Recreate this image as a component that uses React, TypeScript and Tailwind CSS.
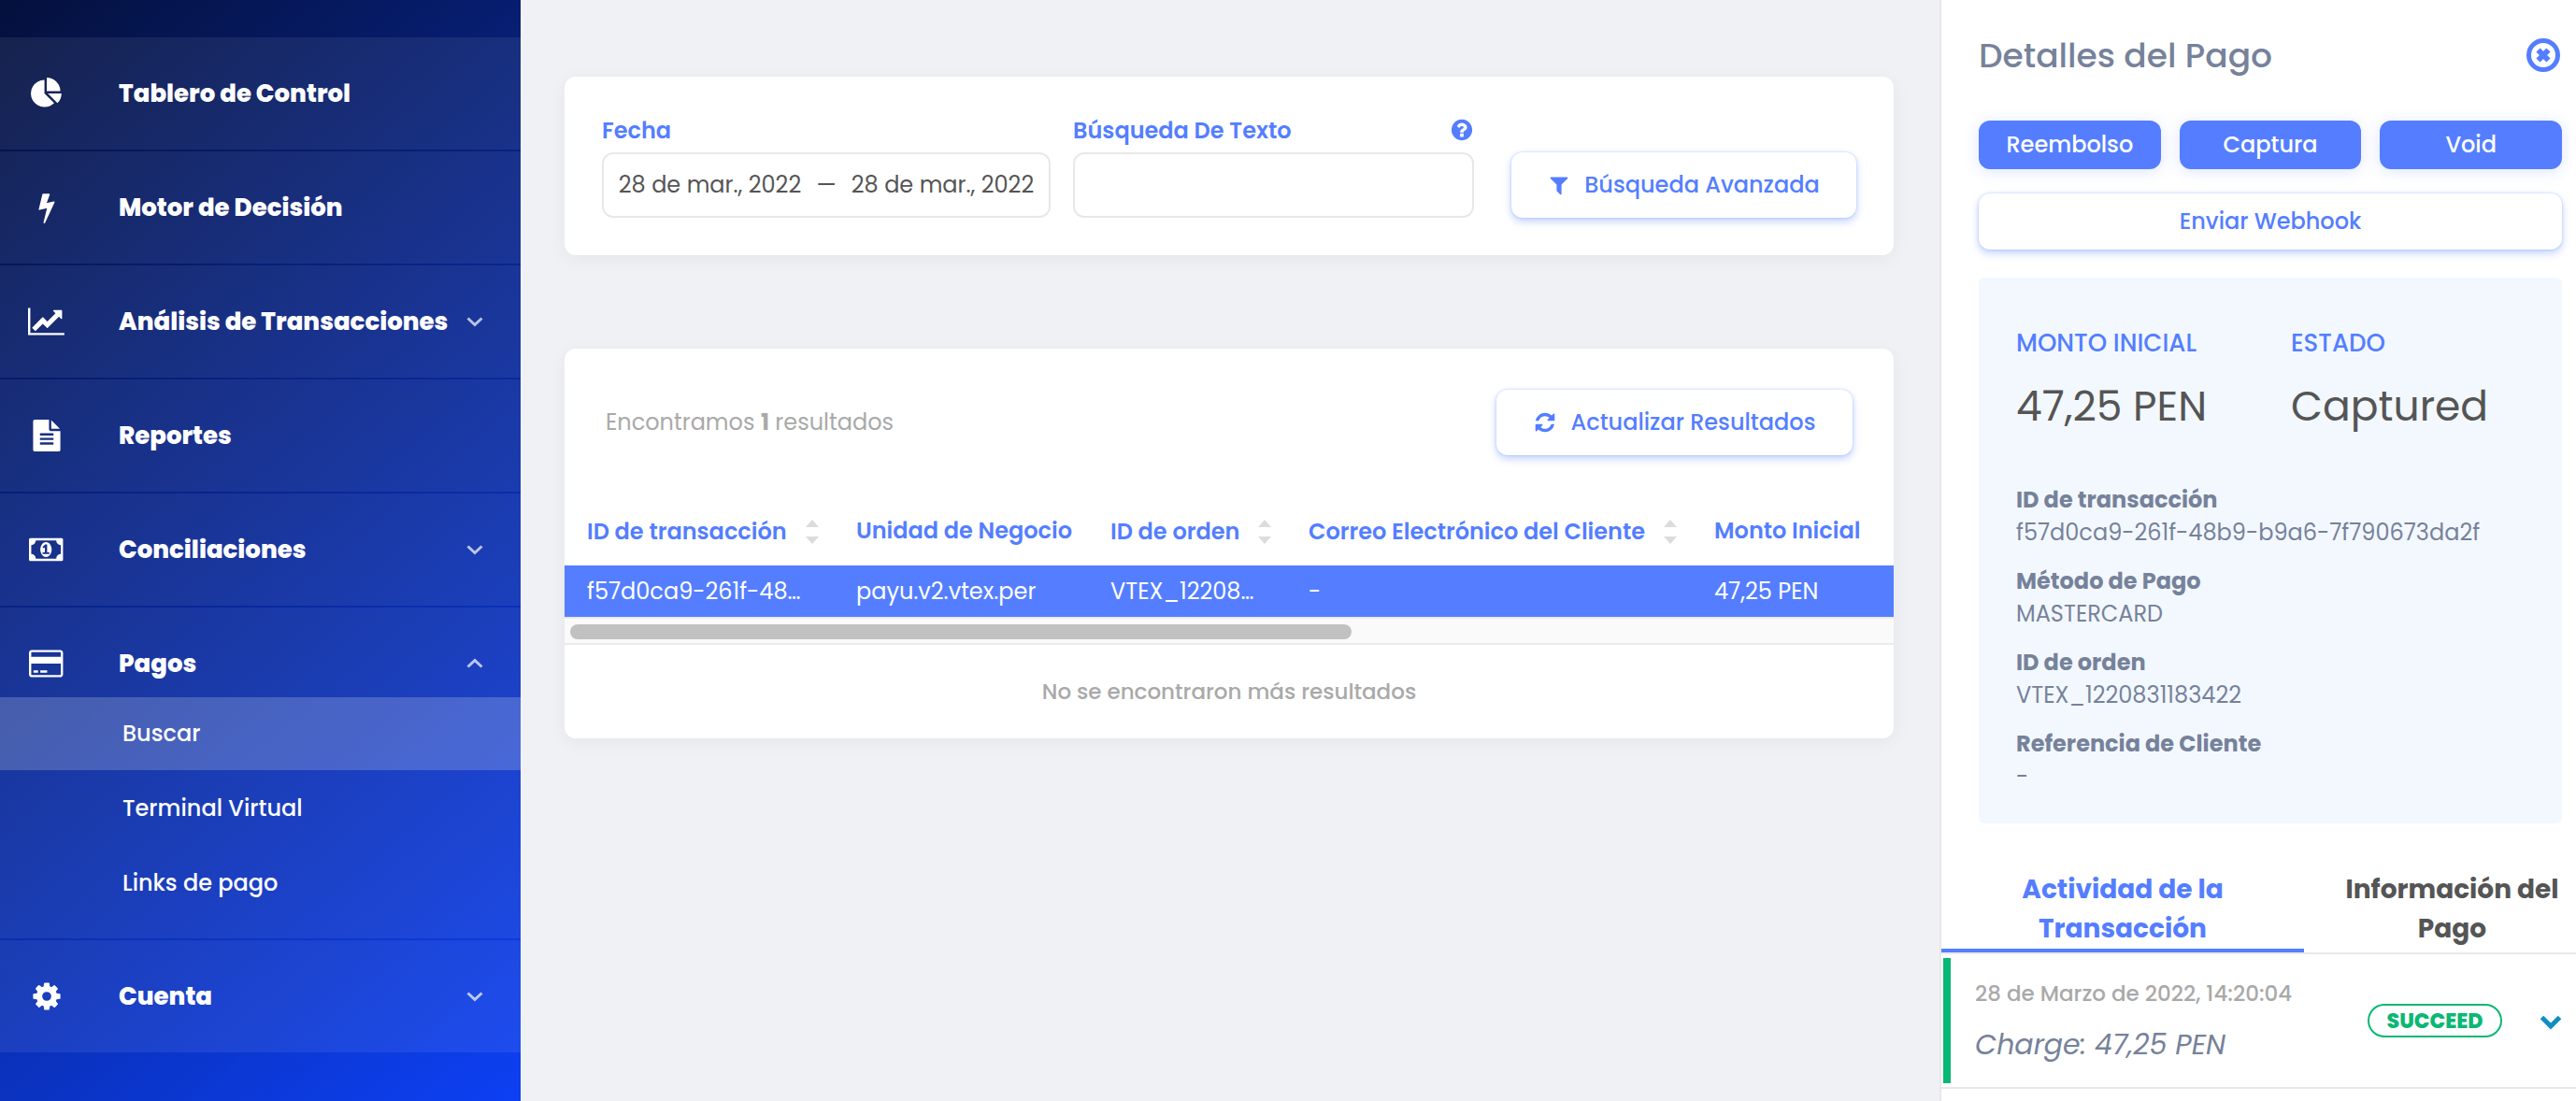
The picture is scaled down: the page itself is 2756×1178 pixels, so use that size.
import React from "react";

const ICONS = {
  pie: { w: 1792, d: "M768 890l546 546q-106 108-247.5 168t-298.5 60q-209 0-385.5-103t-279.5-279.5-103-385.5 103-385.5 279.5-279.5 385.5-103v762zm187 6h773q0 157-60 298.5t-168 247.5zm709-128h-768v-768q209 0 385.5 103t279.5 279.5 103 385.5z" },
  bolt: { w: 1792, d: "M1333 566q18 20 7 44l-540 1157q-13 25-42 25-4 0-14-2-17-5-25.5-19t-4.5-30l197-808-406 101q-4 1-12 1-18 0-31-11-18-15-13-39l201-825q4-16 16-26t28-10h328q19 0 32 12.5t13 29.5q0 8-5 18l-171 463 396-98q8-2 12-2 19 0 34 15z" },
  chart: { w: 2048, d: "M2048 1536v128h-2048v-1536h128v1408h1920zm-128-1248v435q0 21-19.5 29.5t-35.5-7.5l-121-121-633 633q-10 10-23 10t-23-10l-233-233-416 416-192-192 585-585q10-10 23-10t23 10l233 233 464-464-121-121q-16-16-7.5-35.5t29.5-19.5h435q14 0 23 9t9 23z" },
  file: { w: 1792, d: "M1596 476q14 14 28 36h-472v-472q22 14 36 28zm-476 164h544v1056q0 40-28 68t-68 28h-1344q-40 0-68-28t-28-68v-1600q0-40 28-68t68-28h800v544q0 40 28 68t68 28zm160 736v-64q0-14-9-23t-23-9h-704q-14 0-23 9t-9 23v64q0 14 9 23t23 9h704q14 0 23-9t9-23zm0-256v-64q0-14-9-23t-23-9h-704q-14 0-23 9t-9 23v64q0 14 9 23t23 9h704q14 0 23-9t9-23zm0-256v-64q0-14-9-23t-23-9h-704q-14 0-23 9t-9 23v64q0 14 9 23t23 9h704q14 0 23-9t9-23z" },
  money: { w: 1920, d: "M768 1152h384v-96h-128v-448h-114l-148 137 77 80q42-37 55-57h2v288h-128v96zm512-256q0 70-21 142t-59.5 134-101.5 101-138 39-138-39-101.5-101-59.5-134-21-142 21-142 59.5-134 101.5-101 138-39 138 39 101.5 101 59.5 134 21 142zm512 256v-512q-106 0-181-75t-75-181h-1152q0 106-75 181t-181 75v512q106 0 181 75t75 181h1152q0-106 75-181t181-75zm128-832v1152q0 26-19 45t-45 19h-1792q-26 0-45-19t-19-45v-1152q0-26 19-45t45-19h1792q26 0 45 19t19 45z" },
  card: { w: 1920, d: "M1760 128q66 0 113 47t47 113v1216q0 66-47 113t-113 47h-1600q-66 0-113-47t-47-113v-1216q0-66 47-113t113-47h1600zm-1600 128q-13 0-22.5 9.5t-9.5 22.5v224h1664v-224q0-13-9.5-22.5t-22.5-9.5h-1600zm1600 1280q13 0 22.5-9.5t9.5-22.5v-608h-1664v608q0 13 9.5 22.5t22.5 9.5h1600zm-1504-128v-128h256v128h-256zm384 0v-128h384v128h-384z" },
  cog: { w: 1792, d: "M1152 896q0-106-75-181t-181-75-181 75-75 181 75 181 181 75 181-75 75-181zm512-109v222q0 12-8 23t-20 13l-185 28q-19 54-39 91 35 50 107 138 10 12 10 25t-9 23q-27 37-99 108t-94 71q-12 0-26-9l-138-108q-44 23-91 38-16 136-29 186-7 28-36 28h-222q-14 0-24.5-8.5t-11.5-21.5l-28-184q-49-16-90-37l-141 107q-10 9-25 9-14 0-25-11-126-114-165-168-7-10-7-23 0-12 8-23 15-21 51-66.5t54-70.5q-27-50-41-99l-183-27q-13-2-21-12.5t-8-23.5v-222q0-12 8-23t19-13l186-28q14-46 39-92-40-57-107-138-10-12-10-24 0-10 9-23 26-36 98.5-107.5t94.5-71.5q13 0 26 10l138 107q44-23 91-38 16-136 29-186 7-28 36-28h222q14 0 24.5 8.5t11.5 21.5l28 184q49 16 90 37l142-107q9-9 24-9 13 0 25 10 129 119 165 170 7 8 7 22 0 12-8 23-15 21-51 66.5t-54 70.5q26 50 41 98l183 28q13 2 21 12.5t8 23.5z" },
  filter: { w: 1792, d: "M1595 295q17 41-14 70l-493 493v742q0 42-39 59-13 5-25 5-27 0-45-19l-256-256q-19-19-19-45v-486l-493-493q-31-29-14-70 17-39 59-39h1280q42 0 59 39z" },
  refresh: { w: 1792, d: "M1639 1056q0 5-1 7-64 268-268 434.5t-478 166.5q-146 0-282.5-55t-243.5-157l-129 129q-19 19-45 19t-45-19-19-45v-448q0-26 19-45t45-19h448q26 0 45 19t19 45-19 45l-137 137q71 66 161 102t187 36q134 0 250-65t186-179q11-17 53-117 8-23 30-23h192q13 0 22.5 9.5t9.5 22.5zm25-800v448q0 26-19 45t-45 19h-448q-26 0-45-19t-19-45 19-45l138-138q-148-137-349-137-134 0-250 65t-186 179q-11 17-53 117-8 23-30 23h-199q-13 0-22.5-9.5t-9.5-22.5v-7q65-268 270-434.5t480-166.5q146 0 284 55.5t245 156.5l130-129q19-19 45-19t45 19 19 45z" },
  help: { w: 1792, d: "M1024 1376v-192q0-14-9-23t-23-9h-192q-14 0-23 9t-9 23v192q0 14 9 23t23 9h192q14 0 23-9t9-23zm256-672q0-88-55.5-163t-138.5-116-170-41q-243 0-371 213-15 24 8 42l132 100q7 6 19 6 16 0 25-12 53-68 86-92 34-24 86-24 48 0 85.5 26t37.5 59q0 38-20 61t-68 45q-63 28-115.5 86.5t-52.5 125.5v36q0 14 9 23t23 9h192q14 0 23-9t9-23q0-19 21.5-49.5t54.5-49.5q32-18 49-28.5t46-35 44.5-48 28-60.5 12.5-81zm384 192q0 209-103 385.5t-279.5 279.5-385.5 103-385.5-103-279.5-279.5-103-385.5 103-385.5 279.5-279.5 385.5-103 385.5 103 279.5 279.5 103 385.5z" },
};

type IconName = keyof typeof ICONS;

function Icon({ name, className }: { name: IconName; className: string }) {
  const { w, d } = ICONS[name];
  return (
    <svg viewBox={`0 0 ${w} 1792`} fill="currentColor" className={className} aria-hidden="true">
      <path d={d} />
    </svg>
  );
}

function Chevron({ up = false }: { up?: boolean }) {
  return (
    <svg viewBox="0 0 18 12" fill="none" stroke="currentColor" strokeWidth="3" className="h-3 w-[18px] shrink-0 text-white/70" aria-hidden="true">
      <path d={up ? "M1.5 9.5L9 2.5l7.5 7" : "M1.5 2.5L9 9.5l7.5-7"} />
    </svg>
  );
}

function NavLabel({ icon, label, expand }: { icon: IconName; label: string; expand?: "up" | "down" }) {
  return (
    <>
      <span className="flex w-[39px] shrink-0 justify-center">
        <Icon name={icon} className="h-[34px] w-auto" />
      </span>
      <span className="ml-[58px] flex-1 text-left text-[26px] font-extrabold">{label}</span>
      {expand && <Chevron up={expand === "up"} />}
    </>
  );
}

function NavButton({ icon, label }: { icon: IconName; label: string }) {
  return (
    <li className="bg-white/[0.07]">
      <button type="button" className="flex h-[120px] w-full items-center pl-[30px] pr-10 whitespace-nowrap">
        <NavLabel icon={icon} label={label} expand="down" />
      </button>
    </li>
  );
}

function NavLink({ icon, label }: { icon: IconName; label: string }) {
  return (
    <li className="bg-white/[0.07]">
      <a href="#" className="flex h-[120px] items-center pl-[30px] pr-10 whitespace-nowrap">
        <NavLabel icon={icon} label={label} />
      </a>
    </li>
  );
}

function Sidebar() {
  return (
    <nav className="w-[557px] shrink-0 bg-[linear-gradient(140deg,#04103c,#0d40f3)] pt-10 text-white">
      <ul className="flex flex-col gap-0.5">
        <NavLink icon="pie" label="Tablero de Control" />
        <NavLink icon="bolt" label="Motor de Decisión" />
        <NavButton icon="chart" label="Análisis de Transacciones" />
        <NavLink icon="file" label="Reportes" />
        <NavButton icon="money" label="Conciliaciones" />
        <li className="bg-white/[0.07] pb-5">
          <button type="button" aria-expanded="true" className="flex h-24 w-full items-center pt-6 pl-[30px] pr-10 whitespace-nowrap">
            <NavLabel icon="card" label="Pagos" expand="up" />
          </button>
          <ul className="flex flex-col gap-0.5 text-2xl font-medium">
            <li>
              <a href="#" aria-current="page" className="flex h-[78px] items-center bg-white/20 pl-[131px]">Buscar</a>
            </li>
            <li>
              <a href="#" className="flex h-[78px] items-center pl-[131px]">Terminal Virtual</a>
            </li>
            <li>
              <a href="#" className="flex h-[78px] items-center pl-[131px]">Links de pago</a>
            </li>
          </ul>
        </li>
        <NavButton icon="cog" label="Cuenta" />
      </ul>
    </nav>
  );
}

const outlineButton =
  "flex items-center justify-center rounded-xl bg-white text-2xl font-medium text-[#547eff] whitespace-nowrap shadow-[0_4px_8px_rgba(84,126,255,0.35),0_0_3px_rgba(84,126,255,0.35)]";

function SearchCard() {
  return (
    <form className="flex items-end rounded-xl bg-white p-10 pt-[46px] shadow-[0_4px_20px_rgba(0,0,0,0.05)]">
      <fieldset className="w-[480px] shrink-0">
        <legend className="h-[35px] text-2xl leading-[24px] font-semibold text-[#547eff]">Fecha</legend>
        <div className="flex h-[70px] items-center rounded-xl border-2 border-[#e8e8e8] px-3 text-2xl text-[#555]">
          <input aria-label="Desde" readOnly defaultValue="28 de mar., 2022" className="w-0 flex-1 text-center outline-none" />
          <span className="w-[46px] text-center">—</span>
          <input aria-label="Hasta" readOnly defaultValue="28 de mar., 2022" className="w-0 flex-1 text-center outline-none" />
        </div>
      </fieldset>
      <div className="ml-6 min-w-0 flex-1">
        <div className="flex h-[35px] items-start justify-between text-[#547eff]">
          <label htmlFor="texto" className="text-2xl leading-[24px] font-semibold">Búsqueda De Texto</label>
          <button type="button" aria-label="Ayuda" className="flex h-[22px] items-center">
            <Icon name="help" className="size-[26px]" />
          </button>
        </div>
        <input id="texto" type="text" className="block h-[70px] w-full rounded-xl border-2 border-[#e8e8e8] px-4 text-2xl text-[#555] outline-none" />
      </div>
      <button type="button" className={`${outlineButton} ml-10 h-[70px] w-[369px] gap-[15px]`}>
        <Icon name="filter" className="size-6" />
        Búsqueda Avanzada
      </button>
    </form>
  );
}

function SortIcon() {
  return (
    <svg viewBox="0 0 14 26" className="h-[26px] w-[14px] shrink-0" fill="#dcdcdc" aria-hidden="true">
      <path d="M7 0l7 8H0zM7 26l7-8H0z" />
    </svg>
  );
}

const columns = [
  { title: "ID de transacción", value: "f57d0ca9-261f-48…", sortable: true, width: "w-[288px]" },
  { title: "Unidad de Negocio", value: "payu.v2.vtex.per", sortable: false, width: "w-[272px]" },
  { title: "ID de orden", value: "VTEX_12208…", sortable: true, width: "w-[212px]" },
  { title: "Correo Electrónico del Cliente", value: "-", sortable: true, width: "w-[434px]" },
  { title: "Monto Inicial", value: "47,25 PEN", sortable: false, width: "" },
];

function ResultsCard() {
  return (
    <section className="rounded-xl bg-white shadow-[0_4px_20px_rgba(0,0,0,0.05)]">
      <div className="flex items-center justify-between px-11 pt-11">
        <p className="text-2xl text-[#a9a9a9]">
          Encontramos <b className="font-bold">1</b> resultados
        </p>
        <button type="button" className={`${outlineButton} h-[70px] w-[381px] gap-4`}>
          <Icon name="refresh" className="size-6" />
          Actualizar Resultados
        </button>
      </div>
      <table className="mt-11 w-full table-fixed text-2xl whitespace-nowrap">
        <thead>
          <tr className="h-[74px] text-left text-[#547eff]">
            {columns.map((c) => (
              <th key={c.title} scope="col" className={`${c.width} pl-6 font-semibold`}>
                {c.sortable ? (
                  <button type="button" className="flex items-center gap-5 pt-0.5">
                    {c.title}
                    <SortIcon />
                  </button>
                ) : (
                  c.title
                )}
              </th>
            ))}
          </tr>
        </thead>
        <tbody>
          <tr className="h-[55px] bg-[#547eff] text-white">
            {columns.map((c) => (
              <td key={c.title} className="pl-6">{c.value}</td>
            ))}
          </tr>
        </tbody>
      </table>
      <div className="h-[30px] border-y-2 border-[#ebebeb] bg-[#fafafa] p-1.5">
        <div className="h-4 w-[59.3%] rounded-full bg-[#c1c1c1]" />
      </div>
      <p className="flex h-[100px] items-center justify-center text-[23px] font-medium text-[#a9a9a9]">No se encontraron más resultados</p>
    </section>
  );
}

const details = [
  ["ID de transacción", "f57d0ca9-261f-48b9-b9a6-7f790673da2f"],
  ["Método de Pago", "MASTERCARD"],
  ["ID de orden", "VTEX_1220831183422"],
  ["Referencia de Cliente", "-"],
];

const solidButton =
  "h-[52px] rounded-xl bg-[#547eff] text-2xl font-medium text-white shadow-[0_2px_16px_rgba(84,126,255,0.2)]";

function PaymentPanel() {
  return (
    <aside className="w-[681px] shrink-0 border-l-2 border-[#e8e8ea] bg-white">
      <div className="pr-[15px] pl-10">
        <header className="flex h-[129px] items-start justify-between pt-9">
          <h1 className="text-[36px] leading-[48px] font-medium text-[#76829a]">Detalles del Pago</h1>
          <button type="button" aria-label="Cerrar" className="mt-[5px] mr-0.5">
            <svg viewBox="0 0 36 36" fill="none" stroke="#547eff" className="size-9">
              <circle cx="18" cy="18" r="15.5" strokeWidth="5" />
              <path d="M12.5 12.5l11 11M23.5 12.5l-11 11" strokeWidth="6" />
            </svg>
          </button>
        </header>
        <div className="grid grid-cols-3 gap-5">
          <button type="button" className={solidButton}>Reembolso</button>
          <button type="button" className={solidButton}>Captura</button>
          <button type="button" className={solidButton}>Void</button>
        </div>
        <button type="button" className={`${outlineButton} mt-[26px] h-[60px] w-full`}>Enviar Webhook</button>
        <div className="mt-[30px] rounded-md bg-[#f3f8ff] px-10 pt-[50px] pb-[33px]">
          <dl className="grid grid-cols-[294px_1fr]">
            <div>
              <dt className="text-[26px] leading-[40px] font-medium text-[#547eff]">MONTO INICIAL</dt>
              <dd className="mt-4 text-[44px] leading-[64px] text-[#555]">47,25 PEN</dd>
            </div>
            <div>
              <dt className="text-[26px] leading-[40px] font-medium text-[#547eff]">ESTADO</dt>
              <dd className="mt-4 text-[44px] leading-[64px] text-[#555]">Captured</dd>
            </div>
          </dl>
          <dl className="mt-[50px] flex flex-col gap-[17px] text-2xl leading-[35px] text-[#76829a]">
            {details.map(([k, v]) => (
              <div key={k}>
                <dt className="font-bold">{k}</dt>
                <dd>{v}</dd>
              </div>
            ))}
          </dl>
        </div>
      </div>
      <div role="tablist" className="mt-[50px] flex border-b-2 border-[#e8e8e8] text-[28px] leading-[42px] font-bold">
        <button type="button" role="tab" aria-selected="true" className="w-[388px] border-b-4 border-[#547eff] px-16 text-[#547eff]">
          Actividad de la Transacción
        </button>
        <button type="button" role="tab" aria-selected="false" className="flex-1 border-b-4 border-transparent pl-[26px] text-[#555]">
          Información del Pago
        </button>
      </div>
      <article className="flex h-36 border-b-2 border-[#e8e8e8] py-1 pl-0.5">
        <div className="w-2 bg-[#0ab874]" />
        <div className="flex flex-1 flex-col justify-center pl-[26px]">
          <time className="text-[23px] leading-[36px] font-medium text-[#a9a9a9]">28 de Marzo de 2022, 14:20:04</time>
          <p className="mt-4 text-[30px] leading-[42px] text-[#76829a] italic">Charge: 47,25 PEN</p>
        </div>
        <div className="flex items-center gap-10 pr-[15px]">
          <span className="flex h-9 w-36 items-center justify-center rounded-full border-2 border-[#0ab874] text-[22px] font-extrabold text-[#0ab874]">
            SUCCEED
          </span>
          <button type="button" aria-label="Ver detalle" className="pt-1">
            <svg viewBox="0 0 24 16" fill="none" stroke="#0e8ec2" strokeWidth="5" className="h-4 w-6">
              <path d="M2.5 2.5L12 12l9.5-9.5" />
            </svg>
          </button>
        </div>
      </article>
    </aside>
  );
}

export default function App() {
  return (
    <div className="flex min-h-screen bg-[#f0f1f5] font-['Poppins','Inter',sans-serif]">
      <Sidebar />
      <main className="flex min-w-0 flex-1 flex-col gap-[100px] pt-[82px] pr-[49px] pl-[47px]">
        <SearchCard />
        <ResultsCard />
      </main>
      <PaymentPanel />
    </div>
  );
}
